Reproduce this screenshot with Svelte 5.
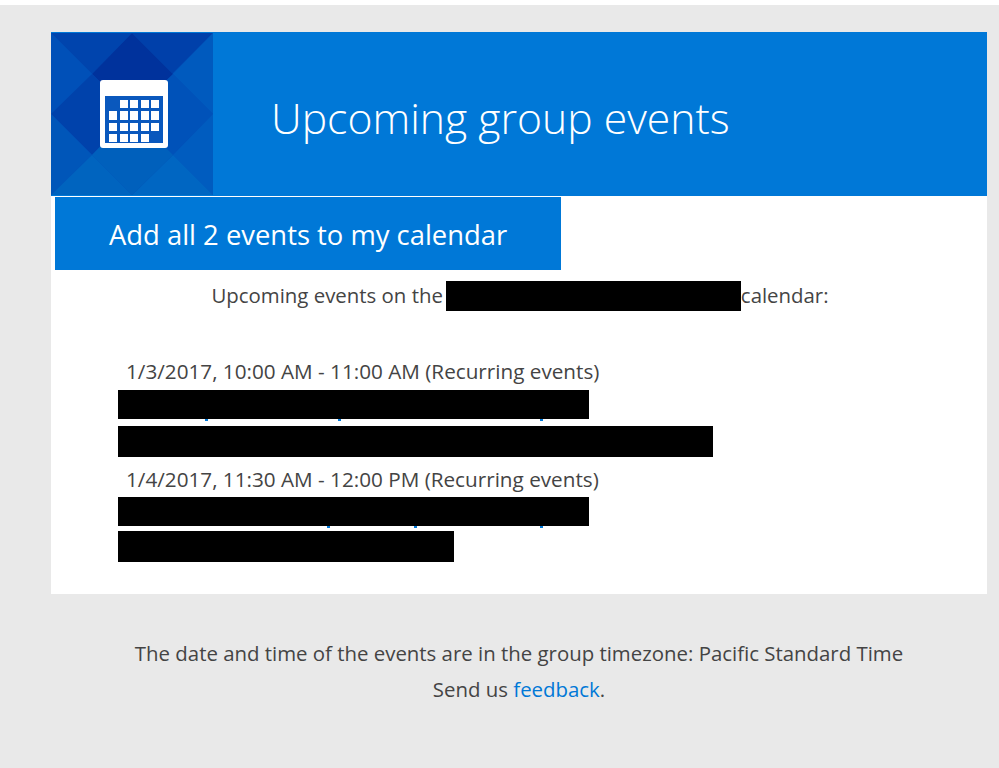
<script lang="ts">
  interface CalEvent {
    when: string;
    linkWidth: number;
    detailWidth: number;
    ticks: number[];
  }

  const events: CalEvent[] = [
    { when: '1/3/2017, 10:00 AM - 11:00 AM (Recurring events)', linkWidth: 471, detailWidth: 595, ticks: [87, 220, 422] },
    { when: '1/4/2017, 11:30 AM - 12:00 PM (Recurring events)', linkWidth: 471, detailWidth: 336, ticks: [209, 296, 422] }
  ];

  // 0 leaves the frame showing through, as in the icon's first and last corners
  const cells = [
    0, 1, 1, 1, 1,
    1, 1, 1, 1, 1,
    1, 1, 1, 1, 1,
    1, 1, 1, 1, 0
  ];
</script>

<div class="page">
  <div class="card">
    <header class="banner">
      <div class="tile">
        <svg class="facets" viewBox="0 0 162 162" aria-hidden="true">
          <rect width="162" height="162" fill="#0050b8" />
          <polygon points="0,0 81,0 41,41 81,81" fill="#0044ad" />
          <polygon points="162,0 81,0 122,41 81,81" fill="#0040aa" />
          <polygon points="81,0 122,41 81,81 41,41" fill="#00329c" />
          <polygon points="0,0 41,41 0,81" fill="#0050b8" />
          <polygon points="0,81 41,41 81,81 41,122" fill="#0042ab" />
          <polygon points="0,81 41,122 0,162" fill="#0056b9" />
          <polygon points="162,0 122,41 162,81" fill="#005abe" />
          <polygon points="162,81 122,41 81,81 122,122" fill="#0052b9" />
          <polygon points="162,81 122,122 162,162" fill="#005cbf" />
          <polygon points="0,162 41,122 81,162" fill="#0064bf" />
          <polygon points="162,162 122,122 81,162" fill="#0066c2" />
          <polygon points="41,122 81,81 122,122 81,162" fill="#0060bc" />
        </svg>
        <div class="cal-icon">
          <div class="cal-grid">
            {#each cells as on}
              <span class:on></span>
            {/each}
          </div>
        </div>
      </div>
      <h1>Upcoming group events</h1>
    </header>

    <div class="add-all">Add all 2 events to my calendar</div>

    <p class="intro">
      <span>Upcoming events on the</span>
      <span class="redacted intro-bar"></span>
      <span>calendar:</span>
    </p>

    <div class="events">
      {#each events as ev}
        <div class="event">
          <div class="when">{ev.when}</div>
          <div class="redacted link-bar" style="width: {ev.linkWidth}px">
            {#each ev.ticks as t}
              <i class="tick" style="left: {t}px"></i>
            {/each}
          </div>
          <div class="redacted detail-bar" style="width: {ev.detailWidth}px"></div>
        </div>
      {/each}
    </div>
  </div>

  <footer class="foot">
    <div>The date and time of the events are in the group timezone: Pacific Standard Time</div>
    <div>Send us <a href="#feedback">feedback</a>.</div>
  </footer>
</div>

<style>
  :global(body) {
    margin: 0;
    background: #fff;
  }

  .page {
    margin-top: 5px;
    height: 763px;
    padding-top: 27px;
    box-sizing: border-box;
    background: #e9e9e9;
    color: #444;
    font-family: "Open Sans", "Noto Sans", sans-serif;
    font-size: 20.4px;
    overflow: hidden;
  }

  .card {
    margin-left: 51px;
    width: 936px;
    height: 562px;
    background: #fff;
  }

  .banner {
    display: flex;
    align-items: center;
    height: 164px;
    background: #0078d7;
  }

  .tile {
    position: relative;
    display: flex;
    align-items: center;
    justify-content: center;
    width: 162px;
    height: 162px;
    flex-shrink: 0;
  }

  .facets {
    position: absolute;
    inset: 0;
    width: 100%;
    height: 100%;
  }

  .cal-icon {
    position: relative;
    left: 2px;
    box-sizing: border-box;
    width: 68px;
    height: 68px;
    padding: 16px 5px 5px;
    background: #fff;
    border-radius: 3px;
  }

  .cal-grid {
    display: grid;
    grid-template-columns: repeat(5, 1fr);
    grid-template-rows: repeat(4, 1fr);
    gap: 3px 2.5px;
    height: 100%;
    box-sizing: border-box;
    padding: 4px 4px 1px;
    background: #0a58bd;
  }

  .cal-grid .on {
    background: #fff;
  }

  h1 {
    margin: 8px 0 0 58px;
    color: #fff;
    font-size: 42.7px;
    font-weight: 300;
    line-height: 1.2;
  }

  .add-all {
    box-sizing: border-box;
    width: 506px;
    height: 73px;
    margin: 1px 0 0 4px;
    padding-left: 54px;
    background: #0078d7;
    color: #fff;
    font-size: 27.4px;
    line-height: 76px;
  }

  .intro {
    display: flex;
    justify-content: center;
    align-items: center;
    margin: 10px 0 0 2px;
    height: 31px;
    line-height: 27px;
  }

  .redacted {
    position: relative;
    background: #000;
  }

  .intro-bar {
    width: 295px;
    height: 30px;
    margin-left: 3px;
  }

  .events {
    margin: 45px 0 0 67px;
    display: flex;
    flex-direction: column;
    gap: 7px;
  }

  .when {
    margin-left: 8px;
    height: 33px;
    line-height: 30px;
    font-size: 20.7px;
  }

  .event:first-child .when {
    height: 34px;
  }

  .link-bar {
    height: 29px;
  }

  .detail-bar {
    height: 31px;
    margin-top: 7px;
  }

  .event + .event .detail-bar {
    margin-top: 5px;
  }

  .tick {
    position: absolute;
    top: 100%;
    width: 3px;
    height: 2px;
    background: #0078d7;
  }

  .foot {
    margin-top: 41px;
    text-align: center;
    line-height: 36px;
    padding-left: 39px;
  }

  .foot a {
    color: #0078d7;
    text-decoration: none;
  }
</style>
